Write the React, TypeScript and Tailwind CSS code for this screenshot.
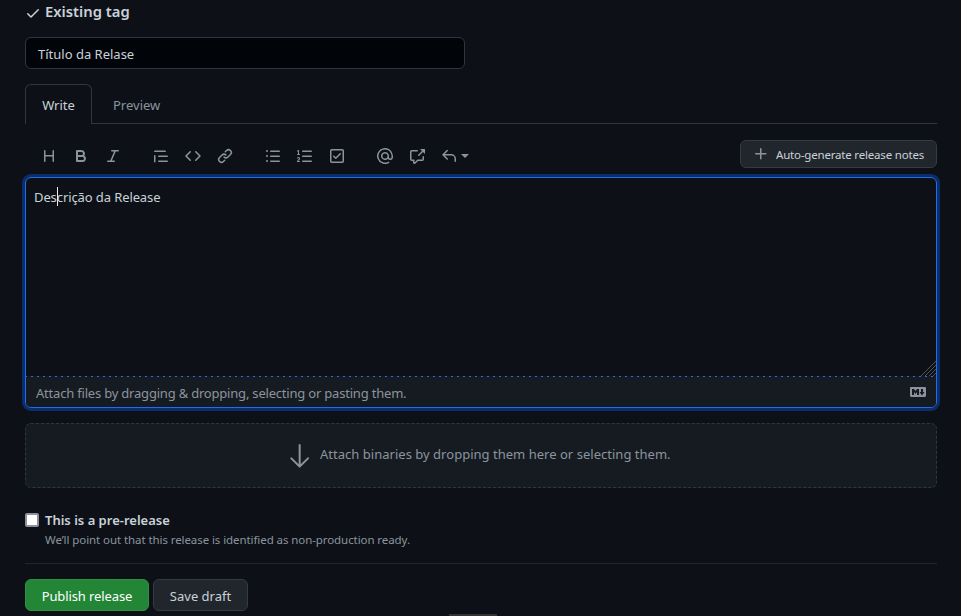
import type { ReactNode } from "react";

const PATHS = {
  check: "M13.78 4.22a.75.75 0 010 1.06l-7.25 7.25a.75.75 0 01-1.06 0L2.22 9.28a.75.75 0 011.06-1.06L6 10.94l6.72-6.72a.75.75 0 011.06 0z",
  heading: "M3.75 2a.75.75 0 01.75.75V7h7V2.75a.75.75 0 011.5 0v10.5a.75.75 0 01-1.5 0V8.5h-7v4.75a.75.75 0 01-1.5 0V2.75A.75.75 0 013.75 2z",
  bold: "M4 2a1 1 0 00-1 1v10a1 1 0 001 1h5.5a3.5 3.5 0 001.852-6.47A3.5 3.5 0 008.5 2H4zm4.5 5a1.5 1.5 0 100-3H5v3h3.5zM5 9v3h4.5a1.5 1.5 0 000-3H5z",
  italic: "M6 2.75A.75.75 0 016.75 2h6.5a.75.75 0 010 1.5h-2.505l-3.858 9H9.25a.75.75 0 010 1.5h-6.5a.75.75 0 010-1.5h2.505l3.858-9H6.75A.75.75 0 016 2.75z",
  quote: "M1.75 2.5a.75.75 0 000 1.5h10.5a.75.75 0 000-1.5H1.75zm4 5a.75.75 0 000 1.5h8.5a.75.75 0 000-1.5h-8.5zm0 5a.75.75 0 000 1.5h8.5a.75.75 0 000-1.5h-8.5zM2.5 7.75a.75.75 0 00-1.5 0v6a.75.75 0 001.5 0v-6z",
  code: "M4.72 3.22a.75.75 0 011.06 1.06L2.06 8l3.72 3.72a.75.75 0 11-1.06 1.06L.47 8.53a.75.75 0 010-1.06l4.25-4.25zm6.56 0a.75.75 0 10-1.06 1.06L13.94 8l-3.72 3.72a.75.75 0 101.06 1.06l4.25-4.25a.75.75 0 000-1.06l-4.25-4.25z",
  link: "M7.775 3.275a.75.75 0 001.06 1.06l1.25-1.25a2 2 0 112.83 2.83l-2.5 2.5a2 2 0 01-2.83 0 .75.75 0 00-1.06 1.06 3.5 3.5 0 004.95 0l2.5-2.5a3.5 3.5 0 00-4.95-4.95l-1.25 1.25zm-4.69 9.64a2 2 0 010-2.83l2.5-2.5a2 2 0 012.83 0 .75.75 0 001.06-1.06 3.5 3.5 0 00-4.95 0l-2.5 2.5a3.5 3.5 0 004.95 4.95l1.25-1.25a.75.75 0 00-1.06-1.06l-1.25 1.25a2 2 0 01-2.83 0z",
  unordered: "M2 4a1 1 0 100-2 1 1 0 000 2zm3.75-1.5a.75.75 0 000 1.5h8.5a.75.75 0 000-1.5h-8.5zm0 5a.75.75 0 000 1.5h8.5a.75.75 0 000-1.5h-8.5zm0 5a.75.75 0 000 1.5h8.5a.75.75 0 000-1.5h-8.5zM3 8a1 1 0 11-2 0 1 1 0 012 0zm-1 6a1 1 0 100-2 1 1 0 000 2z",
  ordered: "M2.003 2.5a.5.5 0 00-.723-.447l-1.003.5a.5.5 0 00.446.895l.28-.14V6H.5a.5.5 0 000 1h2.006a.5.5 0 100-1h-.503V2.5zM5 3.25a.75.75 0 01.75-.75h8.5a.75.75 0 010 1.5h-8.5A.75.75 0 015 3.25zm0 5a.75.75 0 01.75-.75h8.5a.75.75 0 010 1.5h-8.5A.75.75 0 015 8.25zm0 5a.75.75 0 01.75-.75h8.5a.75.75 0 010 1.5h-8.5a.75.75 0 01-.75-.75zM.924 10.32l.003-.004a.851.851 0 01.144-.153A.66.66 0 011.5 10c.195 0 .306.068.374.146a.57.57 0 01.128.376c0 .453-.269.682-.8 1.078l-.035.025C.692 11.98 0 12.495 0 13.5a.5.5 0 00.5.5h2.003a.5.5 0 000-1H1.146c.132-.197.351-.372.654-.597l.047-.035c.47-.35 1.156-.858 1.156-1.845 0-.365-.118-.744-.377-1.038-.268-.303-.658-.484-1.126-.484-.48 0-.84.202-1.068.392a1.858 1.858 0 00-.348.384l-.007.011-.002.004-.001.002-.001.001a.5.5 0 00.851.525z",
  tasklist: "M2.5 2.75a.25.25 0 01.25-.25h10.5a.25.25 0 01.25.25v10.5a.25.25 0 01-.25.25H2.75a.25.25 0 01-.25-.25V2.75zM2.75 1A1.75 1.75 0 001 2.75v10.5c0 .966.784 1.75 1.75 1.75h10.5A1.75 1.75 0 0015 13.25V2.75A1.75 1.75 0 0013.25 1H2.75zm9.03 5.28a.75.75 0 00-1.06-1.06L6.75 9.19 5.28 7.72a.75.75 0 00-1.06 1.06l2 2a.75.75 0 001.06 0l4.5-4.5z",
  mention: "M4.75 2.37a6.5 6.5 0 006.5 11.26.75.75 0 01.75 1.298 8 8 0 113.994-7.273.754.754 0 01.006.095v1.5a2.75 2.75 0 01-5.072 1.475A4 4 0 1112 8v1.25a1.25 1.25 0 002.5 0V7.867a6.5 6.5 0 00-9.75-5.496V2.37zM10.5 8a2.5 2.5 0 10-5 0 2.5 2.5 0 005 0z",
  reference: "M16 1.25v4.146a.25.25 0 01-.427.177L14.03 4.03l-3.75 3.75a.75.75 0 11-1.06-1.06l3.75-3.75-1.543-1.543A.25.25 0 0111.604 1h4.146a.25.25 0 01.25.25zM2.75 3.5a.25.25 0 00-.25.25v7.5c0 .138.112.25.25.25h2a.75.75 0 01.75.75v2.19l2.72-2.72a.75.75 0 01.53-.22h4.5a.25.25 0 00.25-.25v-2.5a.75.75 0 111.5 0v2.5A1.75 1.75 0 0113.25 13H9.06l-2.573 2.573A1.457 1.457 0 014 14.543V13H2.75A1.75 1.75 0 011 11.25v-7.5C1 2.784 1.784 2 2.75 2h5.5a.75.75 0 010 1.5h-5.5z",
  reply: "M6.78 1.97a.75.75 0 010 1.06L3.81 6h6.44A4.75 4.75 0 0115 10.75v2.5a.75.75 0 01-1.5 0v-2.5a3.25 3.25 0 00-3.25-3.25H3.81l2.97 2.97a.75.75 0 11-1.06 1.06L1.47 7.28a.75.75 0 010-1.06l4.25-4.25a.75.75 0 011.06 0z",
  plus: "M7.75 2a.75.75 0 01.75.75V7h4.25a.75.75 0 110 1.5H8.5v4.25a.75.75 0 11-1.5 0V8.5H2.75a.75.75 0 010-1.5H7V2.75A.75.75 0 017.75 2z",
  markdown: "M14.85 3H1.15C.52 3 0 3.52 0 4.15v7.69C0 12.48.52 13 1.15 13h13.69c.64 0 1.15-.52 1.15-1.15v-7.7C16 3.52 15.48 3 14.85 3zM9 11H7V8L5.5 9.92 4 8v3H2V5h2l1.5 2L7 5h2v6zm2.99.5L9.5 8H11V5h2v3h1.5l-2.51 3.5z",
};

function Icon({ name }: { name: keyof typeof PATHS }) {
  return (
    <svg className="size-4 shrink-0" viewBox="0 0 16 16" fill="currentColor" aria-hidden="true">
      <path fillRule="evenodd" d={PATHS[name]} />
    </svg>
  );
}

function ToolGroup({ children }: { children: ReactNode }) {
  return <div className="flex items-center gap-4">{children}</div>;
}

export default function App() {
  return (
    <main className="relative h-[616px] w-[961px] overflow-hidden bg-[#0d1117] pr-6 pl-[25px] font-['Noto_Sans','Open_Sans',sans-serif] text-[13px] leading-5 text-[#c9d1d9]">
      <div className="flex h-[37px] items-start gap-1 pt-px">
        <span className="mt-1"><Icon name="check" /></span>
        <span className="text-[14.8px] font-semibold">Existing tag</span>
      </div>

      <div className="flex h-8 w-[440px] items-center rounded-md border border-[#30363d] bg-[#010409] px-3 pt-0.5">
        Título da Relase
      </div>

      <div className="mt-[15px] flex h-10 border-b border-[#30363d]">
        <div className="flex h-10 w-[67px] items-center justify-center rounded-t-md border border-b-0 border-[#30363d] bg-[#0d1117] pt-0.5 pb-0.5">Write</div>
        <div className="flex h-10 items-center pt-1 pb-0.5 pl-[21px] text-[#8b949e]">Preview</div>
      </div>

      <div className="flex h-[53px] items-start justify-between pt-4 pl-4">
        <div className="flex h-8 items-center gap-8 text-[#8b949e]">
          <ToolGroup><Icon name="heading" /><Icon name="bold" /><Icon name="italic" /></ToolGroup>
          <ToolGroup><Icon name="quote" /><Icon name="code" /><Icon name="link" /></ToolGroup>
          <ToolGroup><Icon name="unordered" /><Icon name="ordered" /><Icon name="tasklist" /></ToolGroup>
          <ToolGroup>
            <Icon name="mention" />
            <Icon name="reference" />
            <span className="flex items-center gap-1">
              <Icon name="reply" />
              <span className="border-x-4 border-t-4 border-x-transparent border-t-current" />
            </span>
          </ToolGroup>
        </div>
        <button className="flex h-7 w-[197px] items-center gap-[7px] rounded-md border border-[#363b42] bg-[#21262d] pl-3 text-[11.5px] tracking-[-0.19px] whitespace-nowrap">
          <span className="flex text-[#8b949e]"><Icon name="plus" /></span>
          <span className="pt-0.5">Auto-generate release notes</span>
        </button>
      </div>

      <section className="flex h-[231px] flex-col overflow-hidden rounded-md border border-[#1f6feb] shadow-[0_0_0_3px_#0c2d6b]">
        <div className="relative flex-1 px-2 pt-[9px] tracking-[-0.1px]">
          Descrição da Release
          <span className="absolute top-[9px] left-[31px] h-[19px] w-px bg-[#e6edf3]" />
          <svg className="absolute right-0 bottom-0 size-[15px]" viewBox="0 0 15 15" stroke="#666" strokeWidth="0.8">
            <path d="M0 15L15 0M4 15L15 4M8 15L15 8M12 15L15 12" />
          </svg>
        </div>
        <div className="h-px shrink-0 bg-[repeating-linear-gradient(90deg,#1f6feb_0px,#1f6feb_1px,#161b22_1px,#161b22_5px,#1f6feb_5px,#1f6feb_6px)]" />
        <div className="flex h-[30px] items-center justify-between bg-[#161b22] px-2.5 text-[#8b949e]">
          <span className="pt-0.5 tracking-[-0.2px]">Attach files by dragging &amp; dropping, selecting or pasting them.</span>
          <Icon name="markdown" />
        </div>
      </section>

      <section className="mt-[15px] flex h-[65px] items-center rounded-md border border-dashed border-[#30363d] bg-[#161b22] pl-[258px] text-[#8b949e]">
        <svg className="size-8 shrink-0" viewBox="0 0 24 24" fill="currentColor" aria-hidden="true">
          <path d="M4.97 13.22a.75.75 0 000 1.06l6.25 6.25a.75.75 0 001.06 0l6.25-6.25a.75.75 0 10-1.06-1.06l-4.97 4.97V3.75a.75.75 0 00-1.5 0v14.44l-4.97-4.97a.75.75 0 00-1.06 0z" />
        </svg>
        <span className="mb-1 ml-1 tracking-[0.02px]">Attach binaries by dropping them here or selecting them.</span>
      </section>

      <div className="mt-[22px] flex h-[53px] gap-1.5">
        <span className="mt-[3px] size-3.5 rounded-[2px] border-2 border-[#8f8f9d] bg-white" />
        <div>
          <div className="font-semibold">This is a pre-release</div>
          <div className="text-[11.5px] leading-5 tracking-[-0.08px] text-[#8b949e]">We’ll point out that this release is identified as non-production ready.</div>
        </div>
      </div>

      <div className="flex gap-1 border-t border-[#21262d] pt-[15px]">
        <button className="h-8 w-[124px] rounded-md border border-[#2f9040] bg-[#238636] pt-0.5 tracking-[-0.1px] text-white">Publish release</button>
        <button className="h-8 w-[95px] rounded-md border border-[#363b42] bg-[#21262d] pt-0.5">Save draft</button>
      </div>
      <span className="absolute bottom-0 left-[449px] h-0.5 w-12 bg-[#333]" />
    </main>
  );
}
